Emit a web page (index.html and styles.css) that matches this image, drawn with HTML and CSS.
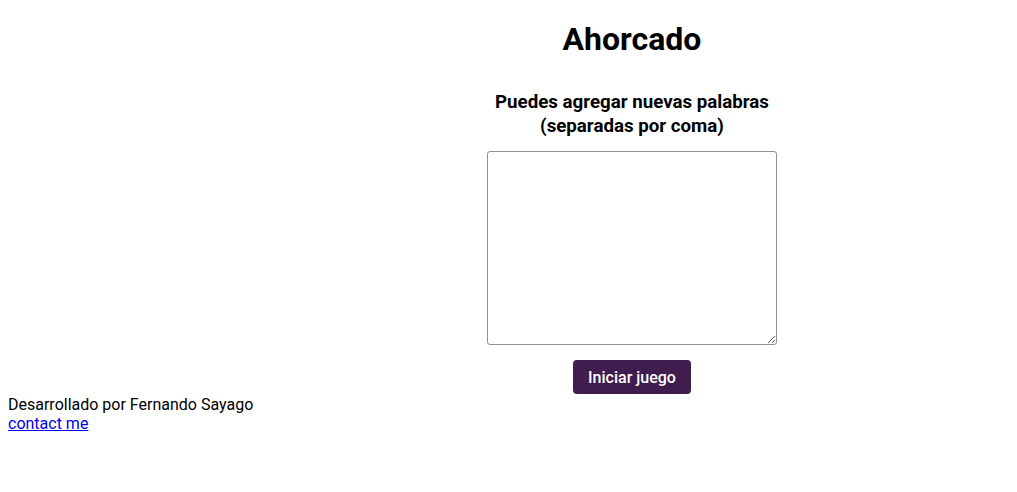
FILE: index.html
```html
<!DOCTYPE html>
<html lang="es">
<head>
<meta charset="utf-8">
<title>Ahorcado</title>
<link rel="stylesheet" href="styles.css">
</head>
<body>
<main class="layout">
  <div class="side"></div>
  <section class="game">
    <h1 class="title">Ahorcado</h1>
    <h3 class="subtitle">Puedes agregar nuevas palabras<br>(separadas por coma)</h3>
    <textarea class="words"></textarea>
    <button class="start">Iniciar juego</button>
  </section>
</main>
<footer class="footer">
  <div>Desarrollado por Fernando Sayago</div>
  <a class="contact" href="#">contact me</a>
</footer>
</body>
</html>
```
FILE: styles.css
```css
body {
  margin: 8px;
  font-family: Roboto, "Liberation Sans", sans-serif;
  font-size: 16px;
  color: #000;
  background: #fff;
}
.layout {
  display: grid;
  grid-template-columns: 247px 1fr;
}
.game {
  display: flex;
  flex-direction: column;
  align-items: center;
}
.title {
  font-size: 32px;
  font-weight: 700;
  margin: 13px 0 0;
  line-height: 37px;
}
.subtitle {
  font-size: 18.72px;
  font-weight: 700;
  text-align: center;
  line-height: 24px;
  margin: 32px 0 13px;
}
.words {
  width: 290px;
  height: 194px;
  box-sizing: border-box;
  border: 1px solid #8e8e95;
  border-radius: 3px;
  margin: 0;
  padding: 2px;
  resize: both;
}
.start {
  margin-top: 15px;
  width: 118px;
  height: 34px;
  border: none;
  border-radius: 4px;
  background: #3f1d4f;
  color: #fff;
  font-family: Roboto, "Liberation Sans", sans-serif;
  font-size: 16px;
  font-weight: 500;
  cursor: pointer;
}
.footer {
  margin-top: 1px;
  line-height: 19px;
}
.contact {
  color: #0000ee;
}
```
